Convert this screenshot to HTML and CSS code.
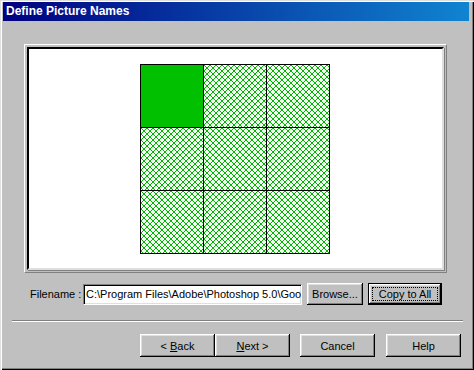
FILE: index.html
```html
<!DOCTYPE html>
<html>
<head>
    <meta name="viewport" content="width=device-width, initial-scale=1.0">
    <title>Define Picture Names</title>
    <link rel="stylesheet" href="styles.css">
</head>
<body>
    <div class="window">
        <div class="titlebar">Define Picture Names</div>

        <div class="panel">
            <div class="canvas">
                <div class="slices">
                    <div class="slice selected"></div>
                    <div class="slice"></div>
                    <div class="slice"></div>
                    <div class="slice"></div>
                    <div class="slice"></div>
                    <div class="slice"></div>
                    <div class="slice"></div>
                    <div class="slice"></div>
                    <div class="slice"></div>
                </div>
            </div>
        </div>

        <div class="file-row">
            <span class="file-label">Filename :</span>
            <div class="textbox">C:\Program Files\Adobe\Photoshop 5.0\Goo</div>
            <div class="btn btn-browse">Browse...</div>
            <div class="btn btn-copy default"><span class="focus">Copy to All</span></div>
        </div>

        <div class="separator"></div>

        <div class="buttons">
            <div class="btn nav-btn"><span>&lt; <u>B</u>ack</span></div>
            <div class="btn nav-btn"><span><u>N</u>ext &gt;</span></div>
            <div class="btn nav-btn btn-cancel">Cancel</div>
            <div class="btn nav-btn btn-help">Help</div>
        </div>
    </div>
</body>
</html>
```

FILE: styles.css
```css
body {
    margin: 0;
    padding: 0;
    background-color: #c0c0c0;
    font-family: "Liberation Sans", Arial, sans-serif;
    font-size: 11px;
    color: #000;
}

.window {
    width: 474px;
    height: 370px;
    box-sizing: border-box;
    padding: 2px 5px 0 3px;
    background-color: #c0c0c0;
    box-shadow: inset 1px 1px #dfdfdf, inset 2px 2px #fff,
                inset -1px -1px #000, inset -2px -2px #808080;
    overflow: hidden;
}

.titlebar {
    height: 19px;
    line-height: 19px;
    padding-left: 3px;
    color: #fff;
    font-weight: bold;
    font-size: 12px;
    background: linear-gradient(to right, #000080, #1084d0);
}

/* picture preview area */
.panel {
    width: 423px;
    height: 229px;
    box-sizing: border-box;
    margin: 23px 0 0 21px;
    padding: 2px;
    border: 1px solid;
    border-color: #fff #808080 #808080 #fff;
}

.canvas {
    height: 100%;
    box-sizing: border-box;
    background-color: #fff;
    border: 2px solid;
    border-color: #000 #dfdfdf #dfdfdf #000;
    box-shadow: 1px 1px #808080;
    display: flex;
    align-items: center;
    justify-content: center;
}

.slices {
    display: grid;
    grid-template-columns: repeat(3, 62px);
    grid-template-rows: repeat(3, 62px);
    gap: 1px;
    padding: 1px;
    background-color: #000;
    margin-left: -1px;
}

.slice {
    background-color: #f4fff4;
    background-image:
        linear-gradient(45deg, transparent 45%, #00b400 45%, #00b400 55%, transparent 55%),
        linear-gradient(-45deg, transparent 45%, #00b400 45%, #00b400 55%, transparent 55%);
    background-size: 6px 6px;
}

.slice.selected {
    background: #00c000;
}

/* filename row */
.file-row {
    display: flex;
    align-items: center;
    margin-top: 10px;
    padding-left: 27px;
    height: 22px;
}

.file-label {
    width: 53px;
}

.textbox {
    width: 219px;
    height: 21px;
    box-sizing: border-box;
    padding: 0 2px;
    line-height: 19px;
    background-color: #fff;
    white-space: nowrap;
    overflow: hidden;
    border: 1px solid;
    border-color: #808080 #fff #fff #808080;
    box-shadow: inset 1px 1px #000, inset -1px -1px #dfdfdf;
}

.btn {
    box-sizing: border-box;
    display: flex;
    align-items: center;
    justify-content: center;
    background-color: #c0c0c0;
    box-shadow: inset -1px -1px #000, inset 1px 1px #fff,
                inset -2px -2px #808080, inset 2px 2px #dfdfdf;
}

.btn-browse {
    width: 56px;
    height: 22px;
    margin-left: 5px;
}

.btn-copy {
    width: 74px;
    height: 22px;
    margin-left: 5px;
    padding: 3px;
}

.btn.default {
    border: 1px solid #000;
}

.focus {
    flex: 1;
    align-self: stretch;
    display: flex;
    align-items: center;
    justify-content: center;
    border: 1px dotted #000;
}

.separator {
    width: 451px;
    margin: 15px 0 0 9px;
    border-top: 1px solid #808080;
    border-bottom: 1px solid #fff;
}

.buttons {
    display: flex;
    margin-top: 12px;
    padding-left: 137px;
}

.nav-btn {
    width: 75px;
    height: 23px;
}

.btn-cancel {
    margin-left: 10px;
}

.btn-help {
    margin-left: 11px;
}
```
